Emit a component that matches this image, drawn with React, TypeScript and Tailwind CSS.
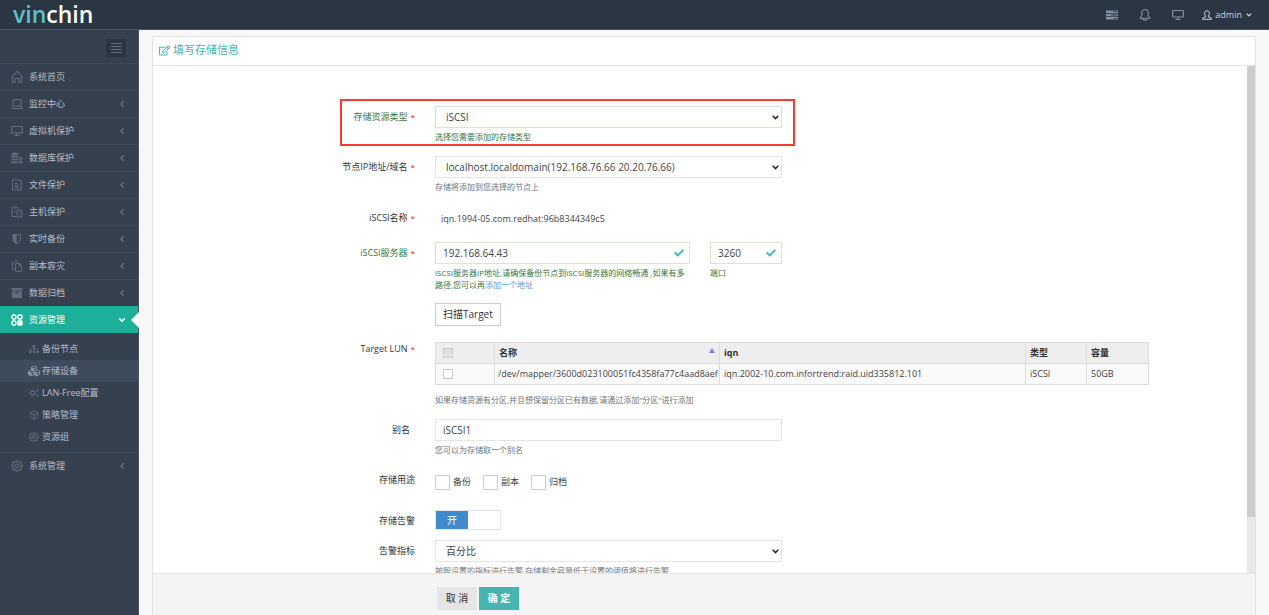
import React, { useState } from "react";
import { SlHome, SlBell, SlSettings } from "react-icons/sl";
import {
  FaSitemap,
  FaCubes,
  FaCheck,
  FaAngleLeft,
  FaAngleDown,
  FaRegEdit,
} from "react-icons/fa";
import { Box } from "lucide-react";

const LaptopIcon = () => (
  <svg viewBox="0 0 12 12" className="w-3 h-3" fill="none" stroke="currentColor">
    <rect x="2" y="1.5" width="8" height="6.5" rx="0.5" />
    <path d="M2 8L.8 10.5h10.4L10 8" />
  </svg>
);

const FileIcon = () => (
  <svg viewBox="0 0 12 12" className="w-3 h-3" fill="none" stroke="currentColor">
    <rect x="1.5" y="1" width="8.5" height="10" />
    <path d="M3.5 4.5h3M3.5 6.5h4.5M3.5 8.5h4.5" />
  </svg>
);

const HostIcon = () => (
  <svg viewBox="0 0 12 12" className="w-3 h-3" fill="none" stroke="currentColor">
    <path d="M5.5 10.5H1V1h4.5l1.5 2" />
    <path d="M3 3.2h1.5M3 5.5h1.5" />
    <path d="M6 4h5v7H6zM7.5 6h2M8.5 8v1.5" />
  </svg>
);

const ShieldIcon = () => (
  <svg viewBox="0 0 12 12" className="w-3 h-3" fill="none" stroke="currentColor">
    <path d="M2 1.5h7.5v4.5c0 2.2-1.6 3.8-3.75 4.8C3.6 9.8 2 8.2 2 6z" />
    <path d="M2 1.5h3.7v9.3C3.6 9.8 2 8.2 2 6z" fill="currentColor" stroke="none" />
  </svg>
);

const CopyIcon = () => (
  <svg viewBox="0 0 12 12" className="w-3 h-3" fill="none" stroke="currentColor">
    <path d="M4 9.5H1.5v-7H3M3.5 1.2h2.3l1 1.2" />
    <path d="M4.5 3.5h4l2 2v5.8h-6zM8.3 3.5v2.3h2.2" />
  </svg>
);

const ArchiveIcon = () => (
  <svg viewBox="0 0 12 12" className="w-3 h-3" fill="currentColor">
    <path d="M.5 1h11v2.6H.5z" />
    <path fillRule="evenodd" d="M1 4.2h10V11H1zM4.3 5.2v1h3.4v-1z" />
  </svg>
);

const DatabaseIcon = () => (
  <svg viewBox="0 0 12 12" className="w-3 h-3" fill="currentColor">
    <ellipse cx="4" cy="2" rx="3.7" ry="1.6" />
    <path d="M.3 3.2c1 1.4 6.4 1.4 7.4 0v1.7C6.7 6.2 1.3 6.2.3 4.900zM.3 5.900c1 1.300 6.400 1.300 6.700.3v1.900c-1 .7-5.700.8-6.700-.500zM.3 8.600c1 1.200 5.700 1.300 6.700.5v2c-1.500.700-5.700.6-6.700-.500z" />
    <ellipse cx="9.800" cy="6" rx="2" ry=".9" />
    <path d="M7.800 6.900c.7.700 3.300.7 4 0v1.200c-.7.800-3.300.8-4 0zM7.800 8.900c.7.700 3.300.7 4 0v1.800c-.7.800-3.300.8-4 0z" />
  </svg>
);

const GridIcon = () => (
  <svg viewBox="0 0 12 12" className="w-3 h-3" fill="none" stroke="currentColor" strokeWidth="1.3">
    <rect x="1" y="1" width="4" height="4" rx="1.3" />
    <rect x="7" y="1" width="4" height="4" rx="1.3" />
    <rect x="1" y="7" width="4" height="4" rx="1.3" />
    <rect x="7" y="7" width="4" height="4" rx="0.5" fill="currentColor" />
  </svg>
);

const MonitorIcon = () => (
  <svg viewBox="0 0 12 12" className="w-3 h-3" fill="none" stroke="currentColor" strokeWidth="1.2">
    <rect x="0.7" y="1.5" width="10.6" height="6.5" rx="0.5" />
    <path d="M6 8v2M3.5 10.5h5" />
  </svg>
);

const GearsIcon = () => (
  <svg viewBox="0 0 12 12" className="w-2.5 h-2.5" fill="none" stroke="currentColor">
    <circle cx="4.2" cy="6" r="2.3" strokeWidth="1.3" />
    <circle cx="4.2" cy="6" r="3.5" strokeDasharray="1.3 1.45" />
    <circle cx="10" cy="3" r="1.3" />
    <circle cx="10" cy="9" r="1.3" />
  </svg>
);

const TasksIcon = () => (
  <svg viewBox="0 0 12 10" className="w-3 h-2.5" fill="currentColor">
    <path d="M0 .5h12v2.4H0zM0 3.8h12v2.4H0zM0 7.1h12v2.4H0z" />
    <path d="M7 1.3h4.3v.8H7zM5 4.6h6.3v.8H5zM8 7.9h3.3v.8H8z" fill="#2b3643" />
  </svg>
);

const UserIcon = () => (
  <svg viewBox="0 0 10 10" className="w-2.5 h-2.5" fill="none" stroke="currentColor" strokeWidth="1">
    <path d="M3.6 6C2.8 5.2 2.6 4.2 2.6 3.1 2.6 1.6 3.5.8 5 .8s2.4.8 2.4 2.3c0 1.1-.2 2.1-1 2.9v1l2.9.9v1.4H.7V7.9L3.6 7z" />
  </svg>
);

const menu = [
  { label: "系统首页", icon: <SlHome strokeWidth="30" className="w-3 h-3" />, leaf: true },
  { label: "监控中心", icon: <LaptopIcon /> },
  { label: "虚拟机保护", icon: <MonitorIcon /> },
  { label: "数据库保护", icon: <DatabaseIcon /> },
  { label: "文件保护", icon: <FileIcon /> },
  { label: "主机保护", icon: <HostIcon /> },
  { label: "实时备份", icon: <ShieldIcon /> },
  { label: "副本容灾", icon: <CopyIcon /> },
  { label: "数据归档", icon: <ArchiveIcon /> },
];

const subMenu = [
  { label: "备份节点", icon: <FaSitemap className="w-2.5 h-2.5" /> },
  { label: "存储设备", icon: <FaCubes className="w-3 h-3" />, active: true },
  { label: "LAN-Free配置", icon: <GearsIcon /> },
  { label: "策略管理", icon: <Box className="w-2.5 h-2.5" /> },
  { label: "资源组", icon: <SlSettings strokeWidth="30" className="w-2.5 h-2.5" /> },
];

function MenuItem({ item }: { item: any }) {
  return (
    <a
      href="#"
      className="flex items-center h-[27px] pl-[11px] pr-3 border-t border-[#3d4957] text-[#b4bcc8]"
    >
      <span className="w-[18px] text-[#606c7d]">{item.icon}</span>
      <span className="flex-1">{item.label}</span>
      {!item.leaf && <FaAngleLeft className="w-2 h-2.5 text-[#606c7d]" />}
    </a>
  );
}

function Sidebar() {
  return (
    <nav className="w-[139px] shrink-0 bg-[#364150] border-r border-[#4b5668] text-[9px]">
      <div className="flex justify-end h-[33px] pt-[9px] pr-3">
        <button
          aria-label="menu"
          className="flex items-center justify-center w-5 h-[18px] bg-[#2b3643] text-[#606c7d]"
        >
          <svg viewBox="0 0 11 10" className="w-[11px] h-2.5" stroke="currentColor">
            <path d="M0 .5h11M0 3.5h11M0 6.5h11M0 9.5h11" />
          </svg>
        </button>
      </div>
      {menu.map((item) => (
        <MenuItem key={item.label} item={item} />
      ))}
      <a
        href="#"
        className="relative flex items-center h-[27px] pl-[11px] pr-3 bg-[#1caf9a] text-white"
      >
        <span className="w-[18px]">
          <GridIcon />
        </span>
        <span className="flex-1">资源管理</span>
        <FaAngleDown className="w-2 h-2.5" />
        <svg viewBox="0 0 8 16" className="absolute -right-px top-1.5 w-2 h-4" fill="#fff">
          <path d="M8 0v16L0 8z" />
        </svg>
      </a>
      <div className="pt-[5px] pb-1">
        {subMenu.map((item) => (
          <a
            key={item.label}
            href="#"
            className={`flex items-center h-[22px] pl-7 text-[#b4bcc8] ${item.active ? "bg-[#3e4b5c]" : ""}`}
          >
            <span className={`flex justify-center w-3 mr-0.5 ${item.active ? "text-[#8793a5]" : "text-[#606c7d]"}`}>
              {item.icon}
            </span>
            {item.label}
          </a>
        ))}
      </div>
      <MenuItem
        item={{ label: "系统管理", icon: <SlSettings strokeWidth="30" className="w-3 h-3" /> }}
      />
    </nav>
  );
}

function Label({
  children,
  required,
  valid,
  htmlFor,
}: {
  children: React.ReactNode;
  required?: boolean;
  valid?: boolean;
  htmlFor?: string;
}) {
  return (
    <label
      htmlFor={htmlFor}
      className={`col-span-3 pr-[11px] pt-1 text-right leading-[14px] ${valid ? "text-[#3c763d]" : "text-[#333]"}`}
    >
      {children}
      {required && <span className="ml-[3px] text-[8px] text-[#e02222]">*</span>}
    </label>
  );
}

function Select({ id, options, valid }: { id: string; options: string[]; valid?: boolean }) {
  return (
    <div className="relative">
      <select
        id={id}
        className={`block w-full h-[22px] pl-2.5 text-[10px] text-[#444] bg-white border appearance-none ${valid ? "border-[#d6e9c6]" : "border-[#e5e5e5]"}`}
      >
        {options.map((o) => (
          <option key={o}>{o}</option>
        ))}
      </select>
      <svg
        viewBox="0 0 7 5"
        className="absolute right-[3px] top-[9px] w-[7px] h-[5px] pointer-events-none"
        fill="none"
        stroke="#222"
        strokeWidth="1.5"
      >
        <path d="M.7.8l2.8 2.8L6.3.8" />
      </svg>
    </div>
  );
}

function Help({ children, valid }: { children: React.ReactNode; valid?: boolean }) {
  return (
    <p className={`mt-[3px] text-[8px] leading-3 ${valid ? "text-[#3c763d]" : "text-[#737373]"}`}>
      {children}
    </p>
  );
}

export default function App() {
  const [alarm, setAlarm] = useState(true);

  return (
    <div className="flex flex-col h-screen overflow-hidden bg-[#f7f7f7] font-['Open_Sans','Noto_Sans_CJK_SC',sans-serif] text-[9px] text-[#444]">
      <header className="flex items-center justify-between h-[30px] shrink-0 pl-[13px] pr-4 bg-[#2b3643] border-b border-[#4b5668]">
        <a href="#" className="text-[23px] leading-7 pb-0.5 font-semibold text-white">
          <span className="text-[#5bc0cb]">vin</span>chin
        </a>
        <div className="flex items-center text-[#8391a5]">
          <button aria-label="tasks" className="mr-[21px]">
            <TasksIcon />
          </button>
          <button aria-label="notifications" className="mr-[21px]">
            <SlBell strokeWidth="30" className="w-3 h-3" />
          </button>
          <button aria-label="screen" className="mr-[18px]">
            <MonitorIcon />
          </button>
          <button className="flex items-center gap-[3px] text-[#c6cfda]">
            <UserIcon />
            admin
            <FaAngleDown className="w-2 h-2" />
          </button>
        </div>
      </header>

      <div className="flex flex-1 min-h-0">
        <Sidebar />
        <main className="flex flex-col flex-1 min-w-0 mt-1.5 ml-[13px] mr-[13px] bg-white border border-b-0 border-[#e2e2e2]">
          <h1 className="flex items-center gap-[3px] h-[29px] shrink-0 pl-1.5 pb-0.5 border-b border-[#e5e5e5] text-[11px] text-[#45b6af]">
            <FaRegEdit className="w-[11px] h-[11px]" />
            填写存储信息
          </h1>

          <div className="flex flex-1 min-h-0">
            <form className="flex-1 pt-10 pr-0.5 overflow-hidden">
              <div className="relative grid grid-cols-12 h-[50px]">
                <div className="absolute left-[187px] -top-[7px] w-[455px] h-[47px] border-2 border-[#fb3838] pointer-events-none" />
                <Label htmlFor="type" required valid>
                  存储资源类型
                </Label>
                <div className="col-span-4 pl-[9px] pr-2">
                  <Select id="type" options={["iSCSI"]} valid />
                  <Help valid>选择您需要添加的存储类型</Help>
                </div>
              </div>

              <div className="grid grid-cols-12 h-[51px]">
                <Label htmlFor="node" required>
                  节点IP地址/域名
                </Label>
                <div className="col-span-4 pl-[9px] pr-2">
                  <Select id="node" options={["localhost.localdomain(192.168.76.66 20.20.76.66)"]} />
                  <Help>存储将添加到您选择的节点上</Help>
                </div>
              </div>

              <div className="grid grid-cols-12 h-[35px]">
                <Label required>iSCSI名称</Label>
                <p className="col-span-6 pl-[15px] pt-[5px] leading-[14px]">
                  iqn.1994-05.com.redhat:96b8344349c5
                </p>
              </div>

              <div className="grid grid-cols-12">
                <Label htmlFor="server" required valid>
                  iSCSI服务器
                </Label>
                <div className="col-span-3 px-[9px]">
                  <div className="relative">
                    <input
                      id="server"
                      defaultValue="192.168.64.43"
                      className="block w-full h-[22px] px-[7px] text-[10px] bg-white border border-[#d6e9c6]"
                    />
                    <FaCheck className="absolute right-1.5 top-1.5 w-2.5 h-2.5 text-[#45b6af]" />
                  </div>
                  <Help valid>
                    iSCSI服务器IP地址,请确保备份节点到iSCSI服务器的网络畅通 ,如果有多路径,您可以再
                    <a href="#" className="text-[#5b9bd1]">
                      添加一个地址
                    </a>
                  </Help>
                </div>
                <div className="col-span-1 pl-[11px] pr-2">
                  <div className="relative">
                    <input
                      id="port"
                      defaultValue="3260"
                      aria-label="端口"
                      className="block w-full h-[22px] px-[7px] text-[10px] bg-white border border-[#d6e9c6]"
                    />
                    <FaCheck className="absolute right-1.5 top-1.5 w-2.5 h-2.5 text-[#45b6af]" />
                  </div>
                  <Help valid>端口</Help>
                </div>
              </div>

              <div className="grid grid-cols-12 mt-3">
                <div className="col-start-4 col-span-4 pl-[9px] pr-2">
                  <button
                    type="button"
                    className="h-[23px] px-[7px] text-[10px] text-[#333] bg-white border border-[#ccc]"
                  >
                    扫描Target
                  </button>
                </div>
              </div>

              <div className="grid grid-cols-12 mt-3">
                <Label required>Target LUN</Label>
                <div className="col-span-8 pt-1 pl-[9px] pr-[5px]">
                  <table className="w-full table-fixed border-collapse border border-[#ddd] text-left whitespace-nowrap">
                    <thead>
                      <tr className="h-[21px] bg-[#eee] text-[#333]">
                        <th className="w-[59px] pl-[7px] border border-[#ddd]">
                          <input
                            type="checkbox"
                            aria-label="全选"
                            className="block w-2.5 h-2.5 appearance-none bg-[#e2e2e2] border border-[#ccc]"
                          />
                        </th>
                        <th className="w-[225px] px-1 border border-[#ddd]">
                          <div className="flex justify-between">
                            名称
                            <svg viewBox="0 0 6 6" className="w-1.5 h-1.5 mt-0.5" fill="#7f7fe0">
                              <path d="M3 0l3 5H0z" />
                            </svg>
                          </div>
                        </th>
                        <th className="px-1 border border-[#ddd]">iqn</th>
                        <th className="w-[61px] px-1 border border-[#ddd]">类型</th>
                        <th className="w-[62px] px-1 border border-[#ddd]">容量</th>
                      </tr>
                    </thead>
                    <tbody>
                      <tr className="h-[21px] bg-[#f9f9f9]">
                        <td className="pl-[7px] border border-[#ddd]">
                          <input
                            type="checkbox"
                            aria-label="选择"
                            className="block w-2.5 h-2.5 appearance-none bg-white border border-[#ccc]"
                          />
                        </td>
                        <td className="pl-[3px] border border-[#ddd]">
                          /dev/mapper/3600d023100051fc4358fa77c4aad8aef
                        </td>
                        <td className="px-1 border border-[#ddd]">
                          iqn.2002-10.com.infortrend:raid.uid335812.101
                        </td>
                        <td className="px-1 border border-[#ddd]">iSCSI</td>
                        <td className="px-1 border border-[#ddd]">50GB</td>
                      </tr>
                    </tbody>
                  </table>
                  <div className="pt-1.5">
                    <Help>如果存储资源有分区,并且想保留分区已有数据,请通过添加"分区"进行添加</Help>
                  </div>
                </div>
              </div>

              <div className="grid grid-cols-12 h-[50px] mt-[13px]">
                <Label htmlFor="alias">
                  <span className="mr-[5px]">别名</span>
                </Label>
                <div className="col-span-4 pl-[9px] pr-2">
                  <input
                    id="alias"
                    defaultValue="iSCSI1"
                    className="block w-full h-[22px] px-[7px] text-[10px] bg-white border border-[#e5e5e5]"
                  />
                  <Help>您可以为存储取一个别名</Help>
                </div>
              </div>

              <div className="grid grid-cols-12 h-[41px]">
                <Label>存储用途</Label>
                <div className="col-span-6 flex items-center gap-3 h-6 pt-0.5 pl-[9px]">
                  {["备份", "副本", "归档"].map((name) => (
                    <label key={name} className="flex items-center gap-[3px]">
                      <input
                        type="checkbox"
                        className="w-[15px] h-[15px] appearance-none bg-white border border-[#ccc]"
                      />
                      {name}
                    </label>
                  ))}
                </div>
              </div>

              <div className="grid grid-cols-12 h-[30px]">
                <Label>存储告警</Label>
                <div className="col-span-4 pl-[9px] pr-2">
                  <button
                    type="button"
                    role="switch"
                    aria-checked={alarm}
                    aria-label="存储告警"
                    onClick={() => setAlarm(!alarm)}
                    className={`flex w-[66px] h-5 border border-[#e5e5e5] bg-white ${alarm ? "" : "justify-end"}`}
                  >
                    <span className="flex items-center justify-center w-8 h-full text-[10px] text-white bg-[#428bca]">
                      {alarm ? "开" : "关"}
                    </span>
                  </button>
                </div>
              </div>

              <div className="grid grid-cols-12">
                <Label htmlFor="metric">告警指标</Label>
                <div className="col-span-4 pl-[9px] pr-2">
                  <Select id="metric" options={["百分比"]} />
                  <Help>按照设置的指标进行告警,存储剩余容量低于设置的阈值将进行告警</Help>
                </div>
              </div>
            </form>
            <div className="w-2 shrink-0 bg-[#e9e9e9]">
              <div className="h-8/9 bg-[#cdcdcd]" />
            </div>
          </div>

          <footer className="grid grid-cols-12 h-[42px] shrink-0 pt-[13px] pr-2.5 bg-[#f4f4f4] border-t border-[#e5e5e5]">
            <div className="col-start-4 col-span-6 flex items-start gap-0.5 pl-[11px] text-[10px]">
              <button className="w-10 h-[23px] bg-[#e5e5e5] text-[#333]">取 消</button>
              <button className="w-10 h-[23px] bg-[#45b6af] text-white font-semibold">确 定</button>
            </div>
          </footer>
        </main>
      </div>
    </div>
  );
}
